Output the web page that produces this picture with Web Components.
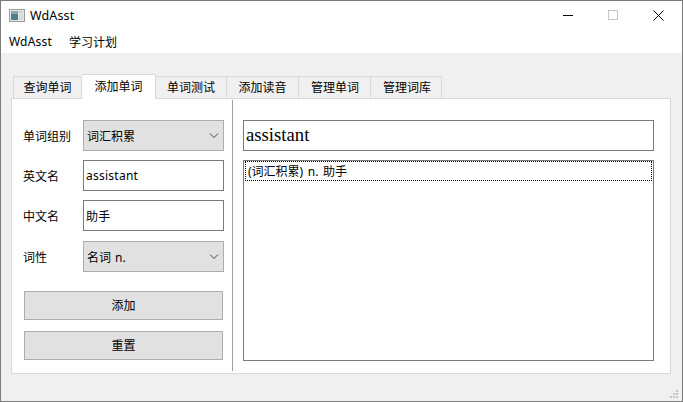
<!DOCTYPE html>
<html lang="zh">
<head>
<meta charset="utf-8">
<title>WdAsst</title>
<style>
  html, body { margin: 0; height: 100%; background: #f0f0f0; }
  body { font: 12px "Noto Sans", "Noto Sans CJK SC", sans-serif; color: #000; overflow: hidden; }
</style>
</head>
<body>
<wd-window>
  <wd-titlebar title-text="WdAsst"></wd-titlebar>
  <wd-menubar><span>WdAsst</span><span style="letter-spacing:0">学习计划</span></wd-menubar>
  <wd-tabs>
    <wd-tab>查询单词</wd-tab>
    <wd-tab selected>添加单词</wd-tab>
    <wd-tab style="width:71px">单词测试</wd-tab>
    <wd-tab>添加读音</wd-tab>
    <wd-tab style="padding-left:1px">管理单词</wd-tab>
    <wd-tab style="width:71px;padding-left:2px">管理词库</wd-tab>
    <wd-add-page slot="page"></wd-add-page>
  </wd-tabs>
</wd-window>

<script>
const define = (name, html, init) => {
  customElements.define(name, class extends HTMLElement {
    connectedCallback() {
      if (this.shadowRoot) return;
      this.attachShadow({ mode: 'open' }).innerHTML = html;
      if (init) init(this);
    }
  });
};

define('wd-window', `
  <style>
    :host { display: flex; flex-direction: column; box-sizing: border-box; width: 683px; height: 402px;
      border: 1px solid #7a7a7a; background: #f0f0f0; position: relative; }
    .grip { position: absolute; right: 1px; bottom: 1px; }
  </style>
  <slot></slot>
  <svg class="grip" width="12" height="12" viewBox="0 0 12 12" fill="#c4c4c4">
    <rect x="7" y="2" width="2" height="2"/>
    <rect x="4" y="5" width="2" height="2"/><rect x="7" y="5" width="2" height="2"/>
    <rect x="1" y="8" width="2" height="2"/><rect x="4" y="8" width="2" height="2"/><rect x="7" y="8" width="2" height="2"/>
  </svg>`);

define('wd-titlebar', `
  <style>
    :host { display: flex; align-items: center; height: 29px; background: #fff; flex: none; }
    .icon { margin: 0 5px 0 8px; flex: none; }
    .name { flex: 1; font-size: 12.5px; letter-spacing: .12px; }
    .btn { width: 46px; height: 29px; display: flex; align-items: center; justify-content: center; }
    .min { margin-left: 5px; }
    .max { margin-left: 3px; }
  </style>
  <svg class="icon" width="16" height="16" viewBox="0 0 16 16">
    <rect x=".5" y="1.5" width="15" height="12" fill="#e4e8e8" stroke="#9a9a9a"/>
    <rect x="2" y="3" width="7" height="9" fill="#4f7f86"/>
    <rect x="2" y="3" width="7" height="3" fill="#8fa4aa"/>
    <rect x="10" y="3" width="4" height="2" fill="#c8d0d0"/>
    <rect x="10" y="6" width="4" height="6" fill="#d8dcdc"/>
  </svg>
  <span class="name"></span>
  <span class="btn"><svg class="min" width="11" height="11"><path d="M0 5.5H10" stroke="#000" fill="none"/></svg></span>
  <span class="btn"><svg class="max" width="11" height="11"><rect x=".5" y=".5" width="9" height="9" stroke="#c8c8c8" fill="none"/></svg></span>
  <span class="btn" style="width:47px"><svg width="11" height="11"><path d="M.5.5L10.5 10.5M10.5.5L.5 10.5" stroke="#000" fill="none"/></svg></span>
`, el => { el.shadowRoot.querySelector('.name').textContent = el.getAttribute('title-text'); });

define('wd-menubar', `
  <style>
    :host { display: flex; gap: 17px; align-items: center; height: 23px; padding: 0 0 0 8px; background: #fff; flex: none; letter-spacing: .2px; }
  </style>
  <slot></slot>`);

define('wd-tabs', `
  <style>
    :host { display: flex; flex-direction: column; flex: none; padding: 22px 11px 0 10px; }
    .bar { display: flex; padding-left: 2px; height: 24px; align-items: flex-end; position: relative; z-index: 1; margin-bottom: -1px; }
    .pane { box-sizing: border-box; height: 276px; border: 1px solid #d9d9d9; background: #fff; }
  </style>
  <div class="bar"><slot></slot></div>
  <div class="pane"><slot name="page"></slot></div>`);

define('wd-tab', `
  <style>
    :host { display: flex; align-items: center; justify-content: center; box-sizing: border-box; height: 23px; width: 72px; padding-bottom: 1px;
      background: #f0f0f0; border: 1px solid #d9d9d9; border-left-width: 0; }
    :host(:first-child) { border-left-width: 1px; width: 69px; }
    :host([selected]) { height: 25px; width: 74px; background: #fff; border-bottom: 0; padding-bottom: 2px; border-left-width: 0; }
  </style>
  <slot></slot>`);

define('wd-combo', `
  <style>
    :host { display: flex; align-items: center; box-sizing: border-box; flex: none; width: 141px; height: 31px; padding: 0 4px 0 3px;
      background: #e1e1e1; border: 1px solid #adadad; word-spacing: 1px; }
    span { flex: 1; }
  </style>
  <span><slot></slot></span>
  <svg width="10" height="6" viewBox="0 0 10 6"><path d="M1 .5L5 4.5L9 .5" stroke="#444" fill="none"/></svg>`);

define('wd-input', `
  <style>
    :host { display: flex; align-items: center; box-sizing: border-box; height: 31px; padding: 0 2px; background: #fff; border: 1px solid #7a7a7a; }
    :host([large]) { font: 18.7px "Liberation Serif", serif; padding-bottom: 2px; }
    :host([narrow]) { flex: none; width: 141px; letter-spacing: .25px; }
  </style>
  <slot></slot>`);

define('wd-button', `
  <style>
    :host { display: flex; align-items: center; justify-content: center; box-sizing: border-box; width: 199px; height: 29px; padding-bottom: 2px;
      background: #e1e1e1; border: 1px solid #adadad; }
  </style>
  <slot></slot>`);

define('wd-row', `
  <style>
    :host { display: flex; align-items: center; height: 31px; }
    span { flex: none; width: 60px; }
  </style>
  <span><slot name="label"></slot></span><slot></slot>`);

define('wd-list', `
  <style>
    :host { display: block; box-sizing: border-box; height: 201px; padding: 0 1px; background: #fff; border: 1px solid #7a7a7a; word-spacing: 1.5px; }
    div { box-sizing: border-box; height: 20px; padding-left: 2px; line-height: 19px; border: 1px dotted #000; }
  </style>
  <div><slot></slot></div>`);

define('wd-add-page', `
  <style>
    :host { display: flex; height: 100%; }
    .left { box-sizing: border-box; width: 220px; flex: none; padding: 21px 0 0 11px; display: flex; flex-direction: column; gap: 9px; }
    .left wd-row:last-of-type { margin-top: 1px; }
    .left wd-button:first-of-type { margin-top: 10px; }
    .left wd-button + wd-button { margin-top: 2px; }
    .split { flex: none; width: 1px; margin: 1px 0 2px; background: #a0a0a0; }
    .right { flex: 1; padding: 21px 16px 12px 10px; display: flex; flex-direction: column; gap: 9px; }
    wd-button { margin-left: 1px; }
  </style>
  <div class="left">
    <wd-row><span slot="label">单词组别</span><wd-combo>词汇积累</wd-combo></wd-row>
    <wd-row><span slot="label">英文名</span><wd-input narrow>assistant</wd-input></wd-row>
    <wd-row><span slot="label">中文名</span><wd-input narrow>助手</wd-input></wd-row>
    <wd-row><span slot="label">词性</span><wd-combo>名词 n.</wd-combo></wd-row>
    <wd-button>添加</wd-button>
    <wd-button>重置</wd-button>
  </div>
  <div class="split"></div>
  <div class="right">
    <wd-input large>assistant</wd-input>
    <wd-list>(词汇积累) n. 助手</wd-list>
  </div>`);
</script>
</body>
</html>
